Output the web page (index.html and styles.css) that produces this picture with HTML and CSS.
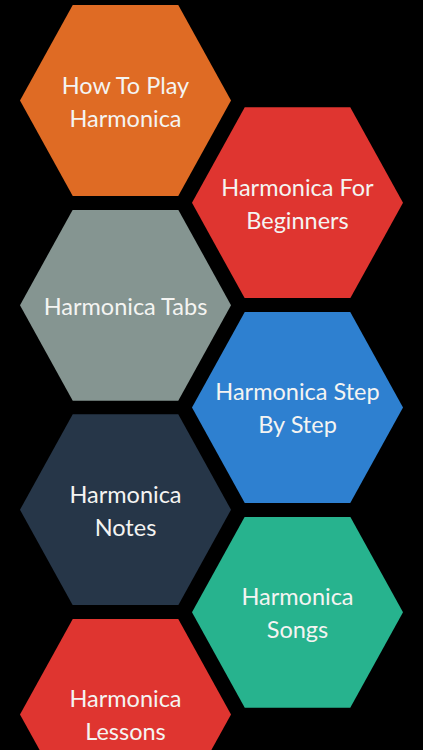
FILE: index.html
```html
<!DOCTYPE html>
<html lang="en">
<head>
<meta charset="utf-8">
<title>Harmonica</title>
<link rel="stylesheet" href="styles.css">
</head>
<body>
<main class="hive">
  <div class="hex hex-left hex-orange r1"><span>How To Play<br>Harmonica</span></div>
  <div class="hex hex-right hex-red r2"><span>Harmonica For<br>Beginners</span></div>
  <div class="hex hex-left hex-gray r3"><span>Harmonica Tabs</span></div>
  <div class="hex hex-right hex-blue r4"><span>Harmonica Step<br>By Step</span></div>
  <div class="hex hex-left hex-navy r5"><span>Harmonica<br>Notes</span></div>
  <div class="hex hex-right hex-green r6"><span>Harmonica<br>Songs</span></div>
  <div class="hex hex-left hex-red r7"><span>Harmonica<br>Lessons</span></div>
</main>
</body>
</html>
```
FILE: styles.css
```css
html, body {
  margin: 0;
  padding: 0;
  background: #000;
  height: 750px;
  overflow: hidden;
}
.hive {
  display: grid;
  grid-template-columns: 172px 39px 172px;
  grid-template-rows: repeat(8, 102.33px);
  padding: 5px 20px 0 20px;
}
.hex {
  height: 191px;
  align-self: start;
  grid-row-end: span 2;
  clip-path: polygon(25% 0, 75% 0, 100% 50%, 75% 100%, 25% 100%, 0 50%);
  display: flex;
  align-items: center;
  justify-content: center;
  text-align: center;
  color: #f4f4f2;
  font-family: Lato, "Open Sans", sans-serif;
  font-size: 23.5px;
  line-height: 33px;
}
.hex span { display: block; padding-top: 2px; }
.hex-left { grid-column: 1 / span 2; }
.hex-right { grid-column: 2 / span 2; }
.r1 { grid-row-start: 1; }
.r2 { grid-row-start: 2; }
.r3 { grid-row-start: 3; }
.r4 { grid-row-start: 4; }
.r5 { grid-row-start: 5; }
.r6 { grid-row-start: 6; }
.r7 { grid-row-start: 7; }
.hex-orange { background: #df6b24; }
.hex-red { background: #df3530; }
.hex-gray { background: #859591; }
.hex-blue { background: #2e80d0; }
.hex-navy { background: #263648; }
.hex-green { background: #27b38e; }
```
